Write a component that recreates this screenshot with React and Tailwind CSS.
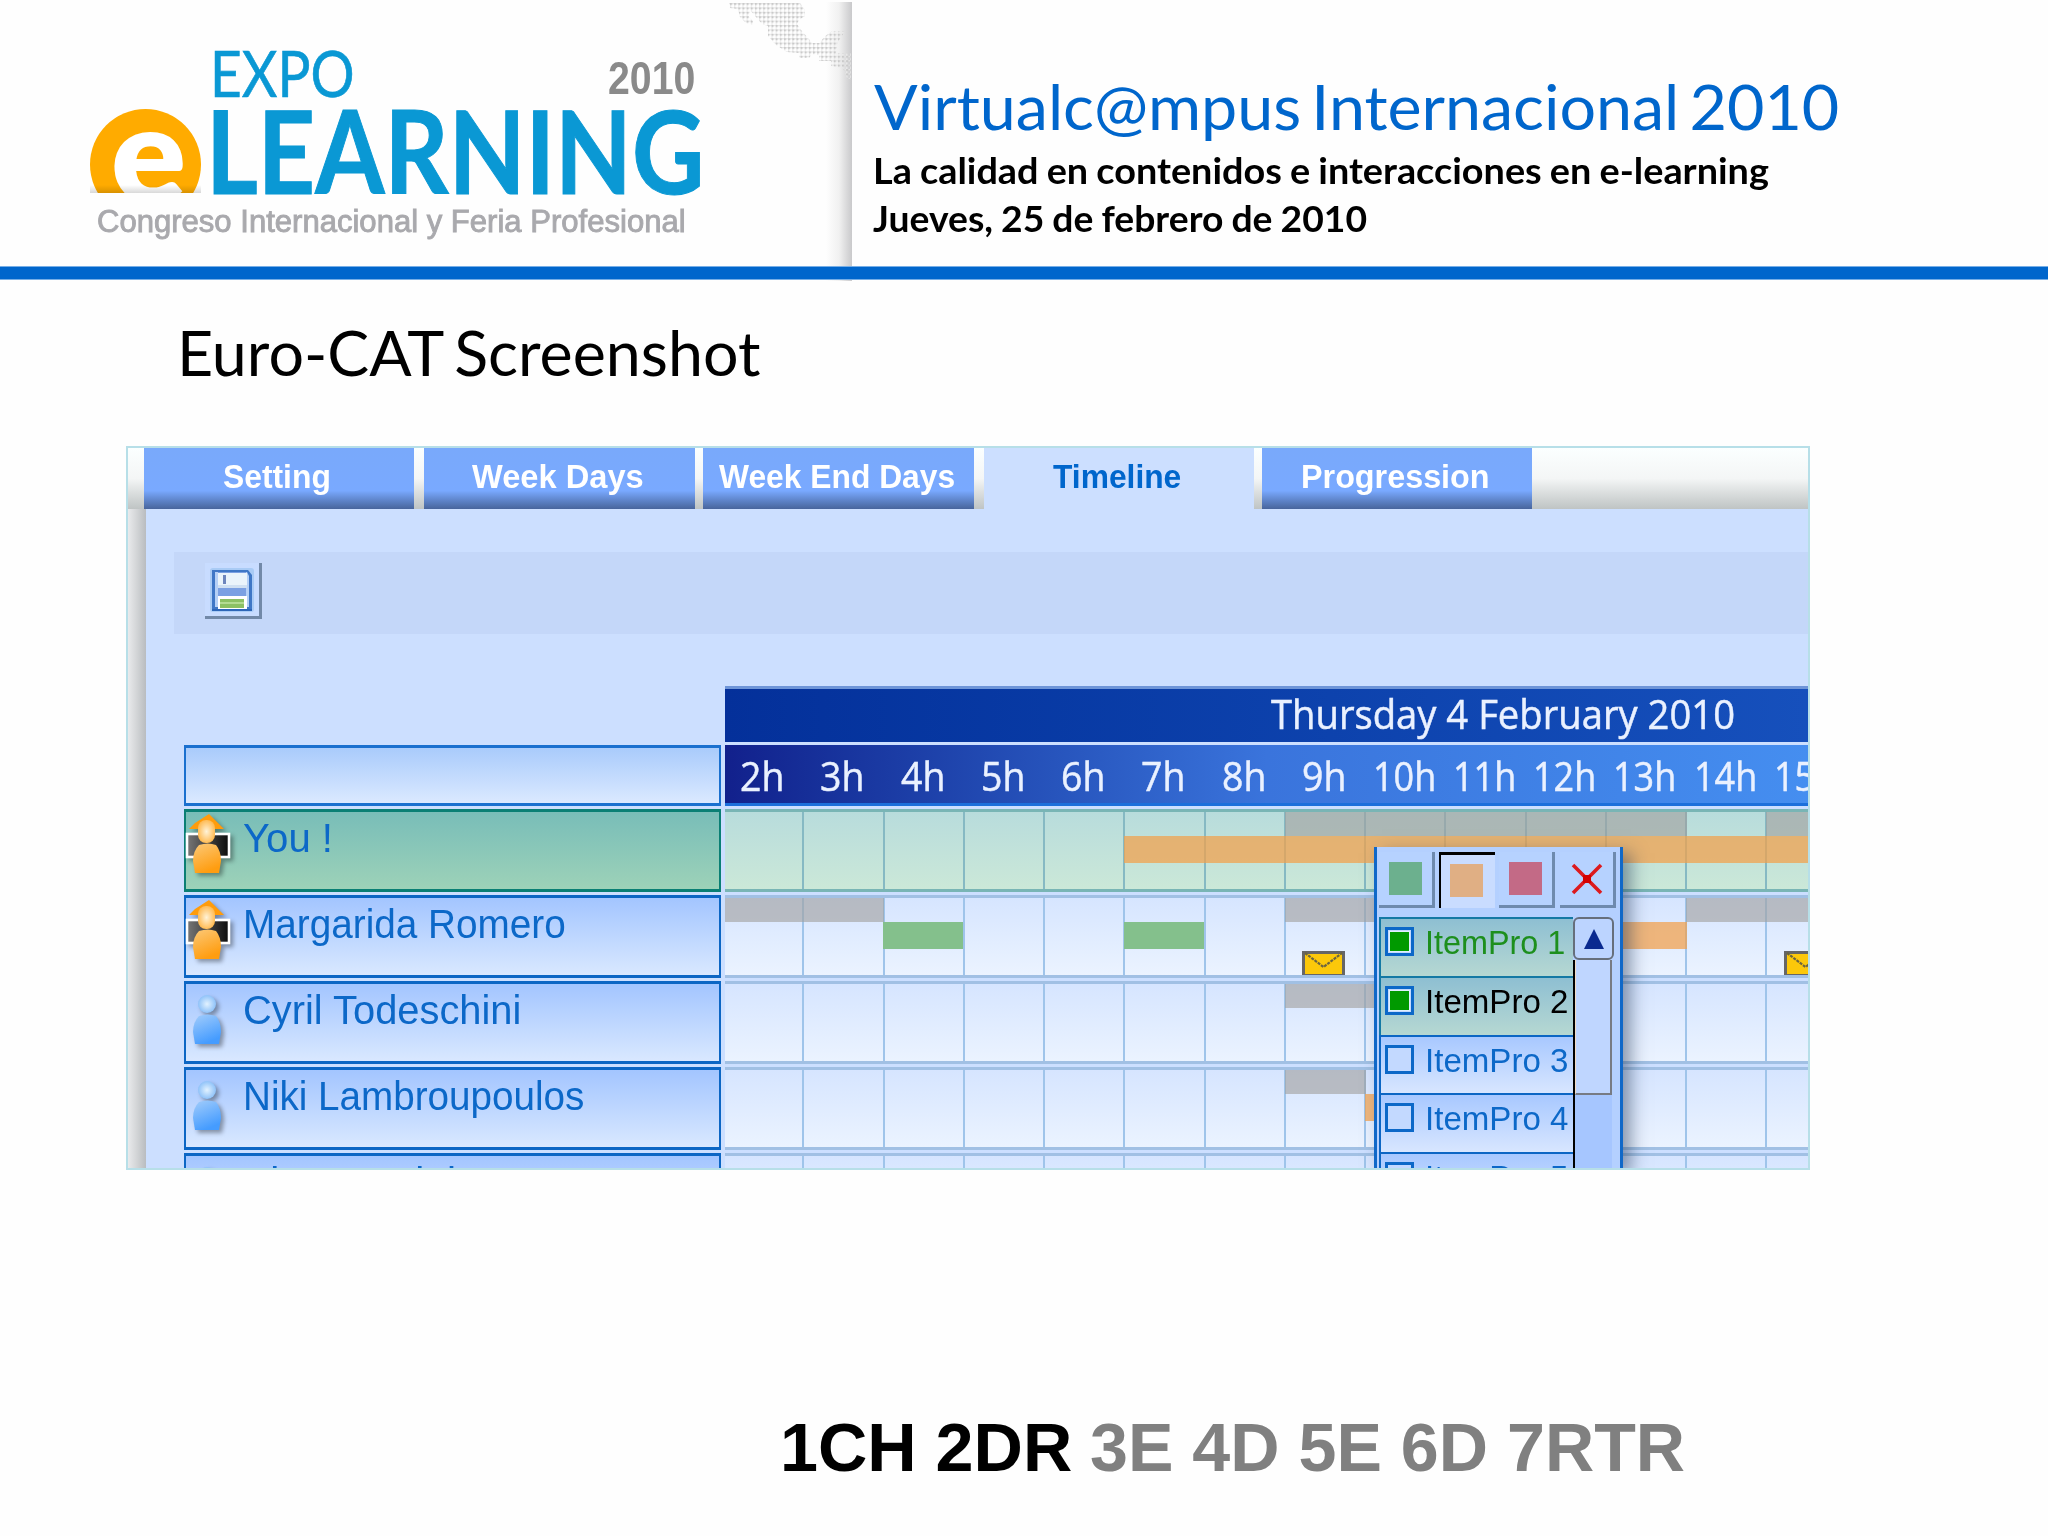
import React, { useLayoutEffect, useRef, useState } from "react";

/* Text line stretched horizontally to an exact width */
function Fit({ w, className = "", children }) {
  const ref = useRef(null);
  const [k, setK] = useState(1);
  useLayoutEffect(() => {
    const r = ref.current.offsetWidth;
    if (r) setK(w / r);
  }, [w, children]);
  return (
    <div className={"shrink-0 whitespace-nowrap " + className} style={{ width: w }}>
      <span ref={ref} className="inline-block origin-left" style={{ transform: `scaleX(${k})` }}>
        {children}
      </span>
    </div>
  );
}

function WorldMap() {
  return (
    <svg className="absolute left-[728px] top-[2px]" width="124" height="84" viewBox="728 2 124 84">
      <defs>
        <pattern id="dots" x="730" y="3" width="4.15" height="4.4" patternUnits="userSpaceOnUse">
          <rect width="4.15" height="1.2" fill="#e6e6e6" />
          <rect width="1.2" height="4.4" fill="#eaeaea" />
          <rect width="2" height="2" fill="#cacaca" />
        </pattern>
      </defs>
      <path
        fill="url(#dots)"
        d="M729 3H800L805 10V16L799 20L797 24L801 30L808 38L812 43L820 43L824 37L832 31L845 31L838 42L836 53H851V80L847 78L843 68L831 66V61H819V55L812 54L809 58H799V53L787 52L776 45L768 36V26L762 24L750 10L749 17L753 21V25L746 23L740 17L738 9L730 8Z"
      />
    </svg>
  );
}

function Logo() {
  return (
    <div className="flex h-[266px] w-[852px] flex-col bg-[#fefefe]">
      <div className="flex h-[109px]">
        <Fit w={145} className="ml-[210px] font-[Lato] text-[63px] leading-[145px] text-[#0a98d4] [-webkit-text-stroke:0.6px_#0a98d4]">EXPO</Fit>
        <Fit w={87} className="ml-[253px] font-['Liberation_Sans'] text-[46px] font-bold leading-[156px] text-[#8a8a8a]">2010</Fit>
      </div>
      <div className="flex h-[84px]">
        <div className="ml-[90px] h-[84px] w-[111px] shrink-0 overflow-hidden">
          <div className="relative h-[111px] w-[111px] rounded-full bg-[#ffab00] text-center">
            <Fit w={75} className="ml-[19px] font-[Lato] text-[132px] font-extrabold leading-[80px] text-white">
              <span className="relative top-[2px]">e</span>
            </Fit>
            <div className="absolute left-0 top-[76px] h-2 w-full bg-gradient-to-b from-transparent to-black/15" />
          </div>
        </div>
        <Fit w={498} className="ml-[5px] font-[Lato] text-[115px] font-bold leading-[80px] text-[#0a98d4] [-webkit-text-stroke:1px_#0a98d4]">LEARNING</Fit>
      </div>
      <Fit w={589} className="ml-[97px] font-['Liberation_Sans'] text-[31px] leading-[58px] text-[#a9a9ad] [-webkit-text-stroke:0.9px_#a9a9ad]">
        Congreso Internacional y Feria Profesional
      </Fit>
    </div>
  );
}

function Header() {
  return (
    <header className="relative h-[280px]">
      <div className="flex h-[266px]">
        <Logo />
        <div className="pt-[61px] font-[Lato]">
          <Fit w={965} className="ml-[22px] h-[86px] text-[61px] leading-[91px] text-[#0066cc] [word-spacing:-6px]">
            Virtualc@mpus Internacional 2010
          </Fit>
          <Fit w={896} className="ml-[21px] h-[48px] text-[36px] font-bold leading-[46px] text-black [word-spacing:-1px]">
            La calidad en contenidos e interacciones en e-learning
          </Fit>
          <Fit w={494} className="ml-[21px] text-[36px] font-bold leading-[46px] text-black [word-spacing:-1px]">
            Jueves, 25 de febrero de 2010
          </Fit>
        </div>
      </div>
      <div className="absolute left-[826px] top-[2px] h-[279px] w-[26px] bg-gradient-to-r from-transparent via-[#f1f1f1] to-[#c9c9cb]" />
      <WorldMap />
      <div className="relative h-[14px] border-y border-[#77aee6] bg-[#0066cc]" />
    </header>
  );
}

const TABS = [
  { t: "Setting", w: 270, ml: 16, tw: 108 },
  { t: "Week Days", w: 271, ml: 10, tw: 172 },
  { t: "Week End Days", w: 271, ml: 8, tw: 236 },
  { t: "Timeline", w: 270, ml: 10, tw: 128, on: true },
  { t: "Progression", w: 270, ml: 8, tw: 189 },
];

function Tabs() {
  return (
    <div className="flex h-[61px] shrink-0 bg-gradient-to-b from-[#fbffff] via-[#f4f6f6] via-50% to-[#bfc4c4]">
      {TABS.map((t) => (
        <div
          key={t.t}
          className={
            "flex shrink-0 justify-center pr-[4px] font-['Liberation_Sans'] text-[33px] font-bold leading-[57px] " +
            (t.on
              ? "bg-[#ccdfff] text-[#0066cc]"
              : "bg-gradient-to-b from-[#79a9fb] from-0% via-[#79a9ff] via-70% to-[#48659c] text-white")
          }
          style={{ width: t.w, marginLeft: t.ml }}
        >
          <Fit w={t.tw}>{t.t}</Fit>
        </div>
      ))}
    </div>
  );
}

function Floppy() {
  return (
    <svg width="46" height="46" viewBox="0 0 46 46">
      <rect x="1" y="1" width="44" height="44" rx="3" fill="#a9cbf5" />
      <path d="M3 3H39L43 8V43H3Z" fill="#3f77c6" />
      <path d="M6 5H38L40 9V40H6Z" fill="#b5d0f6" />
      <path d="M9 5H37V40H9Z" fill="#7ba0e2" />
      <rect x="9" y="6" width="29" height="14" fill="#eaf4fb" />
      <rect x="9" y="18" width="29" height="3" fill="#cfe0f2" />
      <rect x="14" y="8" width="3" height="9" fill="#6d86bd" />
      <rect x="9" y="29" width="29" height="14" fill="#fff" />
      <rect x="11" y="32" width="24" height="9" fill="#8cc063" />
      <rect x="11" y="35" width="24" height="2" fill="#b4db92" />
      <path d="M3 43H43" stroke="#2d66b8" strokeWidth="2" />
    </svg>
  );
}

function Person({ tutor }) {
  const id = tutor ? "or" : "bl";
  return (
    <svg className="-ml-px shrink-0 drop-shadow-[3px_3px_2px_rgba(0,0,0,0.35)]" width="50" height="74" viewBox="0 0 50 74">
      <defs>
        <radialGradient id={id + "h"} cx="50%" cy="50%" r="55%">
          <stop offset="0" stopColor={tutor ? "#fff3d8" : "#e2f2ff"} />
          <stop offset="1" stopColor={tutor ? "#ffb74a" : "#86bdf8"} />
        </radialGradient>
        <linearGradient id={id + "b"} x1="0" y1="0" x2="0.4" y2="1">
          <stop offset="0" stopColor={tutor ? "#fcc978" : "#a3cdfb"} />
          <stop offset="1" stopColor={tutor ? "#ff9d10" : "#459cff"} />
        </linearGradient>
        <linearGradient id="board" x1="0" x2="1">
          <stop offset="0" stopColor="#777" />
          <stop offset="1" stopColor="#0c0c0c" />
        </linearGradient>
      </defs>
      {tutor && <rect x="2" y="22" width="42" height="23" fill="url(#board)" stroke="#fff" strokeWidth="2.6" />}
      {tutor && <path d="M24 2L39 17H4L10 11Z" fill="#ff9c0c" />}
      {tutor ? (
        <rect x="13" y="8" width="17" height="23" rx="8" fill="url(#orh)" />
      ) : (
        <circle cx="22" cy="20" r="9" fill="url(#blh)" />
      )}
      <path
        transform={tutor ? "translate(0 -1)" : "translate(0 -2)"}
        d="M14 34Q23 31 31 34Q36 40 36 50L34 62H10L8 50Q8 40 14 34Z"
        fill={`url(#${id}b)`}
      />
    </svg>
  );
}

const PEOPLE = [
  { n: "You !", w: 90, tutor: true, you: true, h: 83 },
  { n: "Margarida Romero", w: 323, tutor: true, h: 83 },
  { n: "Cyril Todeschini", w: 278, h: 83 },
  { n: "Niki Lambroupoulos", w: 341, h: 83 },
  { n: "Pierre Caini", w: 213, h: 83 },
];

const HOURS = ["2h", "3h", "4h", "5h", "6h", "7h", "8h", "9h", "10h", "11h", "12h", "13h", "14h", "15h"];

const x = (i) => (i === 0 ? 0 : 78 + 80.25 * (i - 1));

const BARS = [
  [["busy", 7, 12], ["busy", 13, 14], ["plan", 5, 14]],
  [["busy", 0, 2], ["busy", 7, 9], ["busy", 12, 14], ["done", 2, 3], ["done", 5, 6], ["plan", 9, 12]],
  [["busy", 7, 9]],
  [["busy", 7, 8], ["plan", 8, 9]],
  [],
];

const BAR_STYLE = {
  busy: "top-0 h-[27px] bg-[#a2a09e]/62",
  plan: "top-[27px] h-[27px] bg-[#f3a04a]/72",
  done: "top-[27px] h-[27px] bg-[#84c08c]",
};

function Envelope() {
  return (
    <svg width="43" height="26" viewBox="0 0 43 26">
      <rect x="1.5" y="1.5" width="40" height="23" fill="#fcc80a" stroke="#666" strokeWidth="3" />
      <path d="M3 2L21.500 16L40 2" fill="none" stroke="#6b6440" strokeWidth="2.2" strokeDasharray="3 1" />
    </svg>
  );
}

function Row({ i, p }) {
  return (
    <div
      className={
        "relative mb-[3px] flex shrink-0 overflow-hidden border-y-[3px] " +
        (p.you
          ? "border-[#79b5b5] bg-gradient-to-b from-[#b8dcdc] to-[#cbe8d8]"
          : "border-[#a1c0e4] bg-gradient-to-b from-[#d6e5ff] to-[#ebf3ff]")
      }
      style={{ height: p.h }}
    >
      {HOURS.map((h, k) => (
        <div
          key={h}
          className={"shrink-0 border-r-2 " + (p.you ? "border-[#86b9c3]" : "border-[#9fc4ea]")}
          style={{ width: k === 0 ? 79.3 : 80.25 }}
        />
      ))}
      {BARS[i].map(([t, a, b]) => (
        <div
          key={t + a}
          className={"absolute -mt-[3px] " + BAR_STYLE[t]}
          style={{ left: x(a), width: x(b) - x(a) + (t === "done" ? -0.5 : 1) }}
        />
      ))}
      {i === 1 && (
        <>
          <div className="absolute left-[577px] top-[53px]"><Envelope /></div>
          <div className="absolute left-[1059px] top-[53px]"><Envelope /></div>
        </>
      )}
    </div>
  );
}

function Timetable() {
  return (
    <div className="mt-[52px] flex flex-1 gap-[4px] overflow-hidden pl-[38px]">
      <div className="flex w-[537px] shrink-0 flex-col pt-[59px]">
        <div className="mb-[3px] h-[61px] shrink-0 border-x-2 border-y-[3px] border-[#1a70cf] bg-gradient-to-b from-[#a9cbfb] to-[#dbe9ff]" />
        {PEOPLE.map((p) => (
          <div
            key={p.n}
            className={
              "mb-[3px] flex shrink-0 border-x-2 border-y-[3px] " +
              (p.you
                ? "border-[#0a7f74] bg-gradient-to-b from-[#78bdb8] to-[#9dd2b8]"
                : "border-[#0c66c4] bg-gradient-to-b from-[#a3c5ff] to-[#d9e8ff]")
            }
            style={{ height: p.h }}
          >
            <Person tutor={p.tutor} />
            <Fit w={p.w} className="ml-[8px] font-['Liberation_Sans'] text-[41px] leading-[52px] text-[#0c68c8]">{p.n}</Fit>
          </div>
        ))}
      </div>
      <div className="flex w-[1083px] shrink-0 flex-col overflow-hidden">
        <div className="mb-[3px] h-[56px] shrink-0 border-t-[3px] border-[#6e95d8] bg-gradient-to-r from-[#04309a] to-[#1650bc] pl-[546px]">
          <Fit w={464} className="font-['Open_Sans'] text-[41px] leading-[49px] text-[#eaf1ff] [-webkit-text-stroke:0.5px_#eaf1ff]">Thursday 4 February 2010</Fit>
        </div>
        <div className="mb-[3px] flex h-[61px] shrink-0 border-b-[3px] border-[#1c6fdb] bg-gradient-to-r from-[#12208c] via-[#3a74dc] via-50% to-[#458ef0]">
          {HOURS.map((h) => (
            <div key={h} className="flex w-[80.25px] shrink-0 justify-center pr-[6px]">
              <Fit w={h.length === 2 ? 44 : 63} className="font-['Open_Sans'] text-[40px] leading-[61px] text-[#eaf1ff] [-webkit-text-stroke:0.5px_#eaf1ff]">{h}</Fit>
            </div>
          ))}
        </div>
        {PEOPLE.map((p, i) => <Row key={p.n} i={i} p={p} />)}
      </div>
    </div>
  );
}

const SWATCHES = ["bg-[#6cb08e]", "bg-[#e0af84]", "bg-[#c36a86]"];

function Popup() {
  return (
    <div className="absolute left-[1246px] top-[399px] flex h-[322px] w-[249px] flex-col border-x-[3px] border-[#1068c8] bg-[#b4d0ff] pl-[2px] shadow-[8px_6px_16px_rgba(40,60,90,0.5)]">
      <div className="flex h-[70px] shrink-0 gap-[4px] pt-[5px]">
        {SWATCHES.map((s, i) => (
          <div
            key={s}
            className={
              "flex h-[56px] w-[56px] items-center justify-center " +
              (i === 1 ? "border-l-2 border-t-[3px] border-black bg-[#c9dcff] pr-[3px] pb-[2px]" : "border-b-[3px] border-r-[3px] border-[#6e8aae] bg-[#b6d2ff]")
            }
          >
            <div className={"h-[33px] w-[33px] " + s} />
          </div>
        ))}
        <div className="ml-px flex h-[56px] w-[56px] items-center justify-center border-b-[3px] border-r-[3px] border-[#6e8aae] bg-[#b6d2ff]">
          <svg width="32" height="32" viewBox="0 0 32 32">
            <path d="M2 2L30 30M30 2L2 30" stroke="#dc1a1e" strokeWidth="3.600" />
            <rect x="12" y="12" width="8" height="8" fill="#d40000" />
          </svg>
        </div>
      </div>
      <div className="flex flex-1 overflow-hidden">
        <div className="flex w-[194px] shrink-0 flex-col">
          {[1, 2, 3, 4, 5].map((n) => (
            <div
              key={n}
              className={
                "flex h-[58.75px] shrink-0 border-l-2 border-t-2 pl-[4px] pt-[8px] " +
                (n < 3
                  ? "border-[#1479a4] bg-gradient-to-b from-[#8ebfd2] to-[#b6d8d2]"
                  : "border-[#0c66c4] bg-gradient-to-b from-[#a8c8ff] to-[#d8e6ff]")
              }
            >
              <div className="flex h-[29px] w-[29px] shrink-0 items-center justify-center border-[3px] border-[#0c68c8] bg-[#c3d9ff]">
                {n < 3 && <div className="h-[21px] w-[21px] border border-[#dff0ff] bg-[#009a00]" />}
              </div>
              <Fit
                w={n === 1 ? 140 : 143}
                className={
                  "ml-[11px] font-['Liberation_Sans'] text-[34px] leading-[31px] " +
                  (n === 1 ? "text-[#1d8f1d]" : n === 2 ? "text-black" : "text-[#0c68c8]")
                }
              >
                {"ItemPro " + n}
              </Fit>
            </div>
          ))}
        </div>
        <div className="flex w-[41px] flex-col">
          <div className="z-10 flex h-[43px] w-[41px] shrink-0 items-center justify-center rounded-[6px] border-2 border-[#666f7c] bg-[#bcd4ff]">
            <svg width="20" height="20" viewBox="0 0 20 20"><path d="M10 0L20 20H0Z" fill="#0a2a90" /></svg>
          </div>
          <div className="flex w-[39px] flex-1 flex-col border-l-2 border-black bg-[#a6c6ff]">
            <div className="h-[135px] border-b-2 border-l border-r-2 border-[#777b84] border-l-[#f2dcc6] bg-[#bfd6ff]" />
          </div>
        </div>
      </div>
    </div>
  );
}

function Screenshot() {
  return (
    <section className="relative ml-[126px] flex h-[724px] w-[1684px] flex-col overflow-hidden border-2 border-[#b7dfe8]">
      <Tabs />
      <div className="flex flex-1 overflow-hidden bg-[#ccdfff]">
        <div className="w-[18px] shrink-0 bg-gradient-to-r from-[#e9eaec] via-[#d2d4d6] to-[#b9bcc0]" />
        <div className="flex w-[1662px] flex-col">
          <div className="ml-[28px] mt-[43px] flex h-[82px] shrink-0 bg-[#c4d7f9]">
            <div className="ml-[31px] mt-[11px] flex h-[56px] w-[57px] items-center justify-center border-b-[3px] border-r-[3px] border-[#7289a8] bg-[#c8dcff]">
              <Floppy />
            </div>
          </div>
          <Timetable />
        </div>
      </div>
      <Popup />
    </section>
  );
}

export default function App() {
  return (
    <main className="flex h-[1536px] w-[2048px] flex-col overflow-hidden bg-[#fefefe]">
      <Header />
      <Fit w={583} className="ml-[177px] h-[166px] font-[Lato] text-[61px] leading-[145px] text-black [word-spacing:-4px]">
        Euro-CAT Screenshot
      </Fit>
      <Screenshot />
      <div className="mt-[238px] flex pl-[780px] font-['Liberation_Sans'] text-[69px] font-bold leading-[80px]">
        <Fit w={292} className="text-black">1CH 2DR</Fit>
        <Fit w={595} className="ml-[18px] text-[#808080]">3E 4D 5E 6D 7RTR</Fit>
      </div>
    </main>
  );
}
